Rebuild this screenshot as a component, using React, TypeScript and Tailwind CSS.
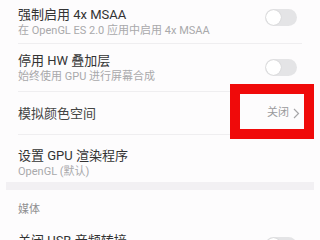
import React from "react";

const font = { fontFamily: 'Roboto, "Noto Sans CJK SC", sans-serif' };

function Toggle() {
  return (
    <div className="relative w-[32px] h-[17px] rounded-full bg-[#e4e4e6] flex items-center px-[1px]">
      <div className="w-[15px] h-[15px] rounded-full bg-white shadow-[0_0_1px_rgba(0,0,0,0.25)]" />
    </div>
  );
}

export default function App() {
  return (
    <div className="w-[320px] h-[240px] overflow-hidden bg-[#fdfcfd]" style={font}>
      {/* Row 1 */}
      <div className="mx-[18px] mr-[18px] h-[44px] border-b border-[#efeef0] flex items-center justify-between">
        <div className="flex flex-col">
          <div className="text-[13px] leading-[17px] text-[#333]">强制启用 4x MSAA</div>
          <div className="text-[11px] leading-[15px] text-[#a9a9ab]">在 OpenGL ES 2.0 应用中启用 4x MSAA</div>
        </div>
        <div className="mr-[5px] mb-[8px]"><Toggle /></div>
      </div>
      {/* Row 2 */}
      <div className="mx-[18px] h-[48px] border-b border-[#efeef0] flex items-center justify-between">
        <div className="flex flex-col">
          <div className="text-[13px] leading-[17px] text-[#333]">停用 HW 叠加层</div>
          <div className="text-[11px] leading-[15px] text-[#a9a9ab]">始终使用 GPU 进行屏幕合成</div>
        </div>
        <div className="mr-[5px]"><Toggle /></div>
      </div>
      {/* Row 3 */}
      <div className="relative mx-[18px] h-[43px] border-b border-[#efeef0] flex items-center justify-between">
        <div className="text-[13px] leading-[17px] text-[#444]">模拟颜色空间</div>
        <div className="flex items-center gap-[4px] mr-[2px] text-[11px] text-[#9a9a9c]">
          <span>关闭</span>
          <svg width="7" height="11" viewBox="0 0 7 11" fill="none">
            <path d="M1 1l4.5 4.5L1 10" stroke="#a6a6a8" strokeWidth="1.2" />
          </svg>
        </div>
        <div className="absolute left-[212px] top-[-8px] w-[84px] h-[55px] border-[10px] border-[#f00a0a]" />
      </div>
      {/* Row 4 */}
      <div className="mx-[18px] h-[47px] flex flex-col pt-[12px]">
        <div className="text-[13px] leading-[17px] text-[#333]">设置 GPU 渲染程序</div>
        <div className="text-[11px] leading-[15px] text-[#a9a9ab]">OpenGL (默认)</div>
      </div>
      {/* Band */}
      <div className="mx-[6px] h-[8px] bg-[#f2f0f3]" />
      {/* Section header */}
      <div className="mx-[18px] h-[42px] flex items-center text-[11px] text-[#8f8f91] pb-[2px]">媒体</div>
      {/* Row 5 */}
      <div className="mx-[18px] flex items-start justify-between">
        <div className="text-[13px] leading-[17px] text-[#333]">关闭 USB 音频转接</div>
        <div className="mr-[5px] mt-[5px]"><Toggle /></div>
      </div>
    </div>
  );
}
